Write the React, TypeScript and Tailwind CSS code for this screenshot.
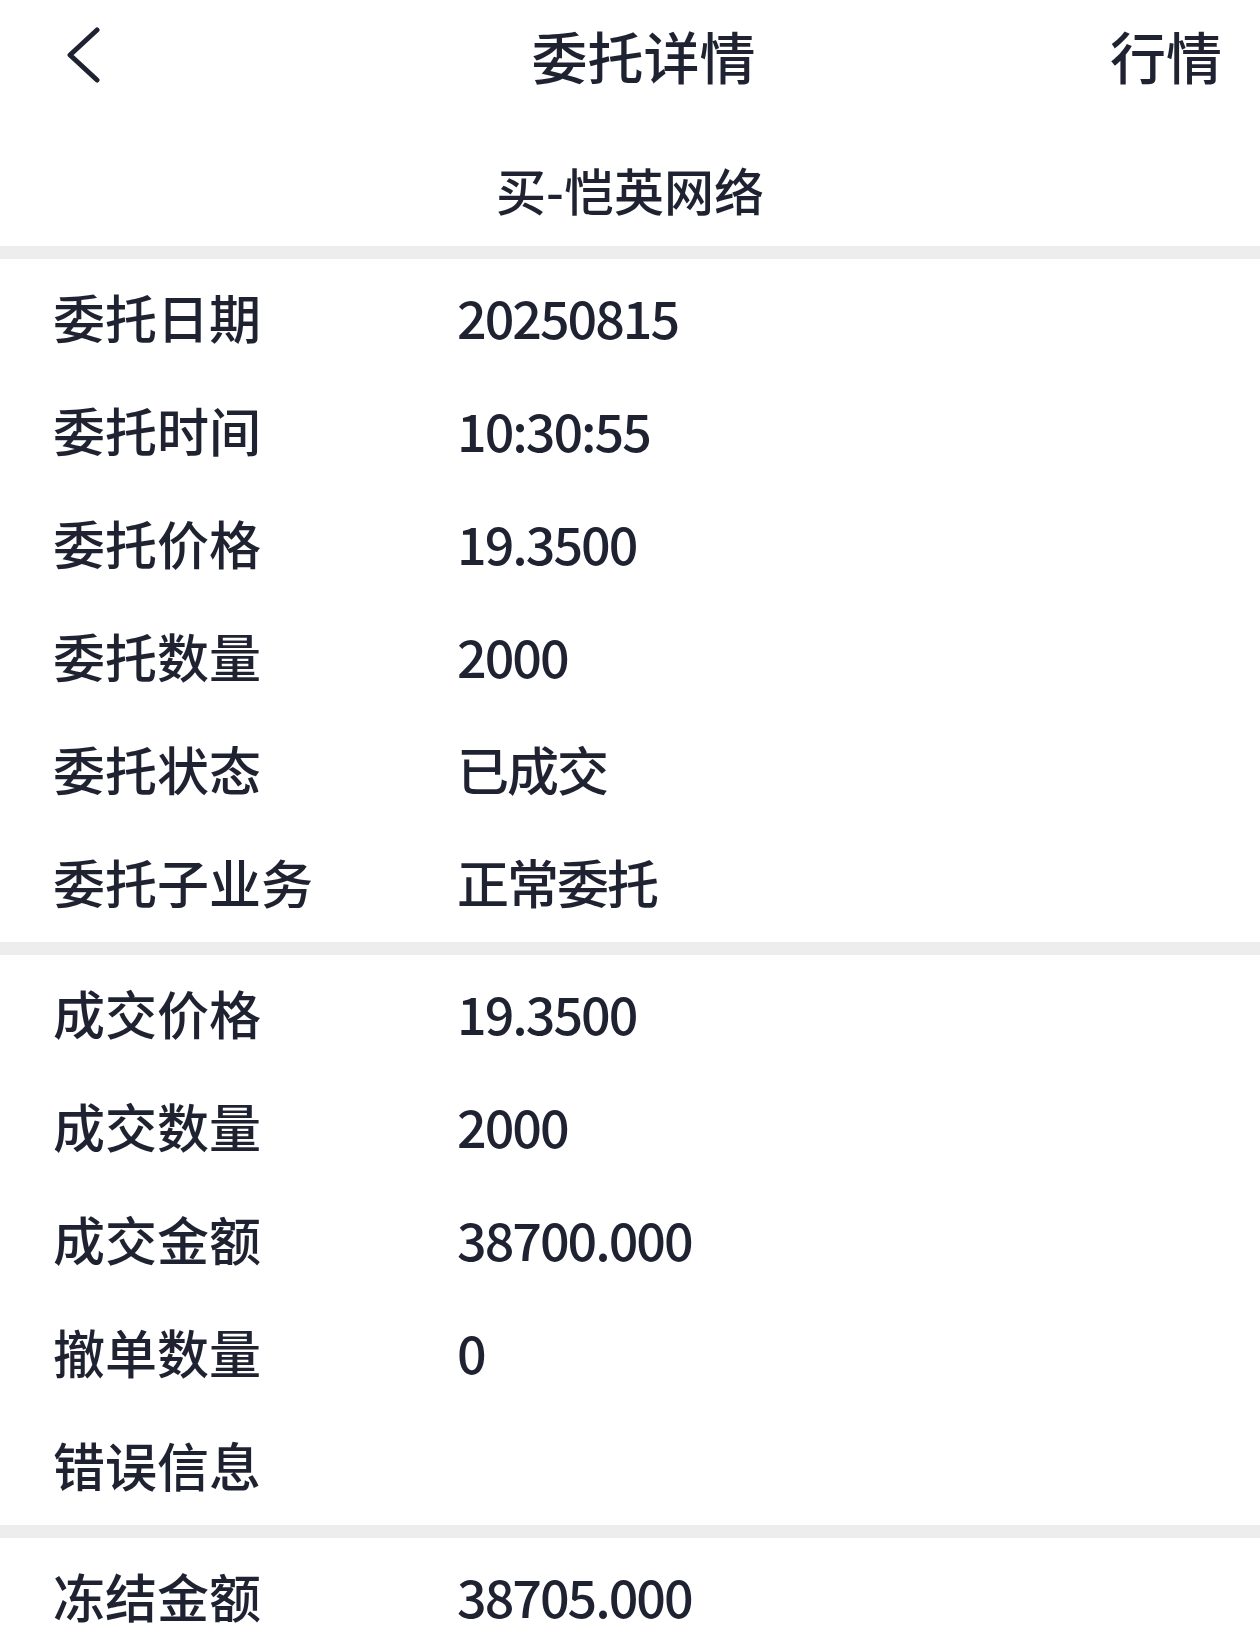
const font = { fontFamily: '"Noto Sans CJK SC", "Noto Sans", sans-serif' }

type Row = { label: string; value: string }

const sections: Row[][] = [
  [
    { label: '委托日期', value: '20250815' },
    { label: '委托时间', value: '10:30:55' },
    { label: '委托价格', value: '19.3500' },
    { label: '委托数量', value: '2000' },
    { label: '委托状态', value: '已成交' },
    { label: '委托子业务', value: '正常委托' },
  ],
  [
    { label: '成交价格', value: '19.3500' },
    { label: '成交数量', value: '2000' },
    { label: '成交金额', value: '38700.000' },
    { label: '撤单数量', value: '0' },
    { label: '错误信息', value: '' },
  ],
  [{ label: '冻结金额', value: '38705.000' }],
]

function InfoRow({ label, value }: Row) {
  return (
    <div className="flex h-[113px] items-center pb-[8px] text-[52px] font-medium leading-none text-[#1f2231]">
      <div className="w-[457px] pl-[53px]">{label}</div>
      <div className="tracking-[-2px]">{value}</div>
    </div>
  )
}

export default function App() {
  return (
    <div className="min-h-screen w-[1260px] bg-white" style={font}>
      {/* 顶部导航 */}
      <div className="flex h-[114px] items-center pb-[4px] text-[#1f2231]">
        <div className="flex w-[177px] pl-[66px]">
          <svg width="36" height="56" viewBox="0 0 36 56" fill="none">
            <path d="M31 3 L4 28 L31 53" stroke="#1f2231" strokeWidth="5" strokeLinecap="round" strokeLinejoin="round" />
          </svg>
        </div>
        <div className="flex-1 text-center text-[56px] font-medium leading-none">委托详情</div>
        <div className="pr-[38px] text-[56px] font-medium leading-none">行情</div>
      </div>

      {/* 股票名称 */}
      <div className="flex h-[132px] items-center justify-center pt-[17px] text-[50px] font-medium leading-none text-[#1f2231]">
        买-恺英网络
      </div>

      {sections.map((rows, i) => (
        <div key={i} className="border-t-[13px] border-[#ededed] pt-[5px]">
          {rows.map(r => (
            <InfoRow key={r.label} {...r} />
          ))}
        </div>
      ))}
    </div>
  )
}
